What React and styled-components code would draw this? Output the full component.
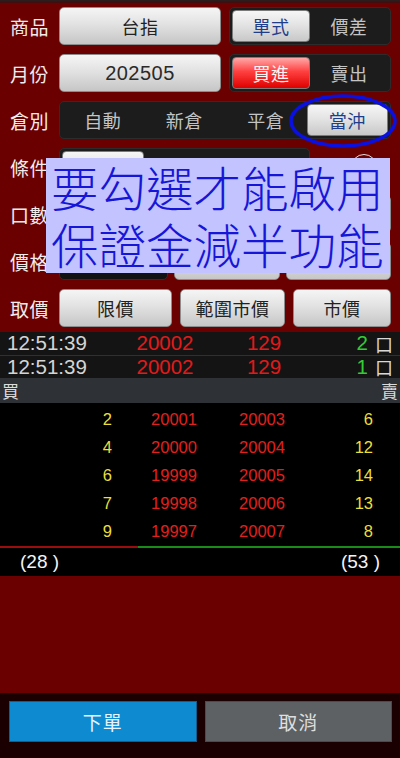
import React from "react";
import styled, { createGlobalStyle } from "styled-components";

const Global = createGlobalStyle`
  html, body { margin: 0; padding: 0; background: #6b0000; }
  body { font-family: "Noto Sans CJK TC", "Noto Sans", sans-serif; }
`;

const Page = styled.div`
  position: relative;
  width: 400px;
  height: 758px;
  display: flex;
  flex-direction: column;
  background: #6b0000;
  overflow: hidden;
`;

const TopEdge = styled.div`
  height: 3px;
  background: linear-gradient(#262020, #4a0808);
`;

const Form = styled.div`
  display: flex;
  flex-direction: column;
  gap: 9px;
  padding: 4px 9px 0 10px;
`;

const Row = styled.div`
  display: grid;
  grid-template-columns: 49px 1fr;
  height: 38px;
  align-items: center;
`;

const Label = styled.div`
  color: #f2ecec;
  font-size: 19px;
  line-height: 1;
  letter-spacing: 0.5px;
  white-space: nowrap;
`;

const Cells = styled.div`
  display: grid;
  grid-template-columns: ${(p) => p.$cols};
  gap: ${(p) => p.$gap || 8}px;
  height: 100%;
  align-items: center;
`;

const LightButton = styled.div`
  height: 38px;
  box-sizing: border-box;
  border-radius: 5px;
  border: 1px solid #8c8c8c;
  background: linear-gradient(#f5f5f5, #e2e2e2 45%, #c6c6c6);
  color: #222;
  font-size: 18px;
  display: flex;
  align-items: center;
  justify-content: center;
  letter-spacing: 0.5px;
`;

const NumberText = styled.span`
  font-family: "Liberation Sans", Arial, sans-serif;
  font-size: 20px;
  color: #2a2a2a;
`;

const DarkBox = styled.div`
  height: 38px;
  box-sizing: border-box;
  border-radius: 5px;
  background: #121212;
  border: 1px solid #2e2e2e;
`;

const Segmented = styled.div`
  height: 38px;
  box-sizing: border-box;
  border-radius: 5px;
  background: #1c1c1c;
  border: 1px solid #2c2c2c;
  padding: 2px;
  display: grid;
  grid-template-columns: repeat(${(p) => p.$n}, 1fr);
`;

const Segment = styled.div`
  border-radius: 4px;
  display: flex;
  align-items: center;
  justify-content: center;
  font-size: 18px;
  letter-spacing: 0.5px;
  color: ${(p) =>
    p.$variant === "blue" ? "#1e3e8c" : p.$variant === "red" ? "#fff4f4" : "#c4c4c4"};
  background: ${(p) =>
    p.$variant === "blue"
      ? "linear-gradient(#f6f6f6, #e4e4e4 45%, #c8c8c8)"
      : p.$variant === "red"
      ? "linear-gradient(#ffa8a8, #ff4040 45%, #e00000)"
      : "transparent"};
  border: ${(p) => (p.$variant ? "1px solid #7a7a7a" : "none")};
`;

const Ring = styled.div`
  width: 24px;
  height: 24px;
  border-radius: 50%;
  border: 1.5px solid #e8dcdc;
  margin-left: 33px;
`;

const Overlay = styled.div`
  position: absolute;
  left: 46px;
  top: 158px;
  width: 344px;
  height: 115px;
  box-sizing: border-box;
  background: #c3c3ff;
  color: #1616d8;
  font-size: 47.5px;
  line-height: 57px;
  padding: 0 0 0 5px;
  white-space: nowrap;
  font-family: "Noto Sans CJK TC", sans-serif;
  font-weight: 300;
`;

const EllipseMark = styled.svg`
  position: absolute;
  left: 287px;
  top: 93px;
`;

const Ticker = styled.div`
  margin-top: 5px;
  background: #141414;
`;

const TickRow = styled.div`
  display: grid;
  grid-template-columns: 120px 90px 108px 50px 1fr;
  align-items: center;
  height: ${(p) => p.$h}px;
  border-bottom: ${(p) => (p.$line ? "1px solid #303030" : "none")};
  font-family: "Liberation Sans", Arial, sans-serif;
  font-size: 20.5px;
`;

const TickCell = styled.span`
  color: ${(p) => p.$c};
  text-align: ${(p) => p.$a || "left"};
  padding-left: ${(p) => p.$pl || 0}px;
  line-height: 1;
`;

const Unit = styled.span`
  color: #d8d8d8;
  font-size: 18px;
  padding-left: 7px;
  line-height: 1;
  font-family: "Noto Sans CJK TC", sans-serif;
`;

const BookHeader = styled.div`
  height: 25px;
  background: #2e3135;
  display: flex;
  justify-content: space-between;
  align-items: center;
  padding: 0 2px;
  color: #dcdcdc;
  font-size: 17px;
`;

const Book = styled.div`
  background: #000;
  padding: 2px 0 1px;
`;

const BookRow = styled.div`
  display: grid;
  grid-template-columns: 112px 124px 52px 85px 1fr;
  height: 28px;
  align-items: center;
  font-family: "Liberation Sans", Arial, sans-serif;
  font-size: 16.5px;
`;

const BookCell = styled.span`
  color: ${(p) => (p.$kind === "qty" ? "#ecdf3a" : "#e0201c")};
  text-align: ${(p) => p.$a};
  line-height: 1;
`;

const SplitBar = styled.div`
  display: grid;
  grid-template-columns: 138px 1fr;
  height: 2px;
`;

const BarPart = styled.div`
  background: ${(p) => p.$c};
`;

const Totals = styled.div`
  height: 28px;
  background: #000;
  display: flex;
  justify-content: space-between;
  align-items: center;
  padding: 0 20px 0 20px;
  color: #f4f4f4;
  font-family: "Liberation Sans", Arial, sans-serif;
  font-size: 19px;
`;

const Spacer = styled.div`
  flex: 1;
`;

const Footer = styled.div`
  height: 65px;
  box-sizing: border-box;
  background: #1a0000;
  padding: 8px 8px 16px 9px;
  display: grid;
  grid-template-columns: 1fr 1fr;
  gap: 8px;
`;

const ActionButton = styled.div`
  background: ${(p) => p.$bg};
  color: ${(p) => p.$fg};
  border: 1px solid ${(p) => p.$border};
  display: flex;
  align-items: center;
  justify-content: center;
  font-size: 19px;
  letter-spacing: 1px;
`;

const ticks = [
  { time: "12:51:39", price: "20002", vol: "129", qty: "2" },
  { time: "12:51:39", price: "20002", vol: "129", qty: "1" },
];

const book = [
  ["2", "20001", "20003", "6"],
  ["4", "20000", "20004", "12"],
  ["6", "19999", "20005", "14"],
  ["7", "19998", "20006", "13"],
  ["9", "19997", "20007", "8"],
];

export default function App() {
  return (
    <Page>
      <Global />
      <TopEdge />
      <Form>
        <Row>
          <Label>商品</Label>
          <Cells $cols="1fr 1fr">
            <LightButton>台指</LightButton>
            <Segmented $n={2}>
              <Segment $variant="blue">單式</Segment>
              <Segment>價差</Segment>
            </Segmented>
          </Cells>
        </Row>
        <Row>
          <Label>月份</Label>
          <Cells $cols="1fr 1fr">
            <LightButton>
              <NumberText>202505</NumberText>
            </LightButton>
            <Segmented $n={2}>
              <Segment $variant="red">買進</Segment>
              <Segment>賣出</Segment>
            </Segmented>
          </Cells>
        </Row>
        <Row>
          <Label>倉別</Label>
          <Segmented $n={4}>
            <Segment>自動</Segment>
            <Segment>新倉</Segment>
            <Segment>平倉</Segment>
            <Segment $variant="blue">當沖</Segment>
          </Segmented>
        </Row>
        <Row>
          <Label>條件</Label>
          <Cells $cols="251px 1fr">
            <Segmented $n={3}>
              <Segment $variant="blue" />
              <Segment />
              <Segment />
            </Segmented>
            <Ring />
          </Cells>
        </Row>
        <Row>
          <Label>口數</Label>
          <Cells $cols="109px 1fr 1fr" $gap={6}>
            <DarkBox />
            <LightButton />
            <LightButton />
          </Cells>
        </Row>
        <Row>
          <Label>價格</Label>
          <Cells $cols="109px 1fr 1fr" $gap={6}>
            <DarkBox />
            <LightButton />
            <LightButton />
          </Cells>
        </Row>
        <Row>
          <Label>取價</Label>
          <Cells $cols="113px 105px 1fr">
            <LightButton>限價</LightButton>
            <LightButton>範圍市價</LightButton>
            <LightButton>市價</LightButton>
          </Cells>
        </Row>
      </Form>

      <Ticker>
        {ticks.map((t, i) => (
          <TickRow key={i} $h={i === 0 ? 23 : 22} $line={i === 0}>
            <TickCell $c="#d4d4d4" $pl={7}>{t.time}</TickCell>
            <TickCell $c="#e21a1a" $a="center">{t.price}</TickCell>
            <TickCell $c="#e21a1a" $a="center">{t.vol}</TickCell>
            <TickCell $c="#34cc34" $a="right">{t.qty}</TickCell>
            <Unit>口</Unit>
          </TickRow>
        ))}
      </Ticker>
      <BookHeader>
        <span>買</span>
        <span>賣</span>
      </BookHeader>
      <Book>
        {book.map((r, i) => (
          <BookRow key={i}>
            <BookCell $kind="qty" $a="right">{r[0]}</BookCell>
            <BookCell $a="center">{r[1]}</BookCell>
            <BookCell $a="center">{r[2]}</BookCell>
            <BookCell $kind="qty" $a="right">{r[3]}</BookCell>
          </BookRow>
        ))}
      </Book>
      <SplitBar>
        <BarPart $c="#9a0e0e" />
        <BarPart $c="#1a8a1a" />
      </SplitBar>
      <Totals>
        <span>(28 )</span>
        <span>(53 )</span>
      </Totals>
      <Spacer />
      <Footer>
        <ActionButton $bg="#0e8bd0" $fg="#e6f4ff" $border="#1a5a8a">下單</ActionButton>
        <ActionButton $bg="#5d6164" $fg="#dedede" $border="#484c4f">取消</ActionButton>
      </Footer>

      <Overlay>
        要勾選才能啟用
        <br />
        保證金減半功能
      </Overlay>
      <EllipseMark width="112" height="58" viewBox="0 0 112 58">
        <ellipse cx="56" cy="28" rx="52" ry="25" fill="none" stroke="#0a10e0" strokeWidth="3.5" />
      </EllipseMark>
    </Page>
  );
}
